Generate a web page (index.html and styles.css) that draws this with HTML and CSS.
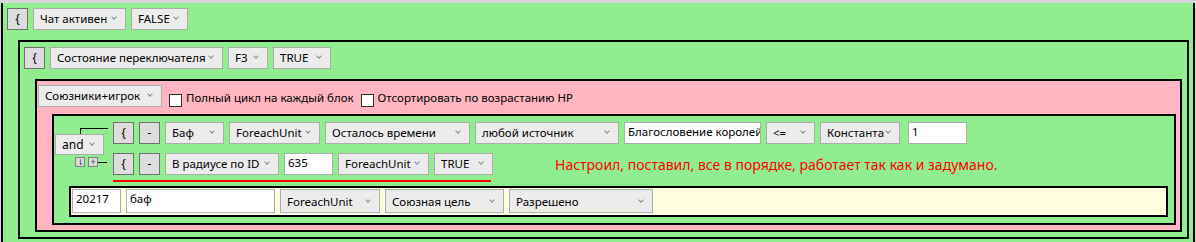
FILE: index.html
```html
<!DOCTYPE html>
<html lang="ru">
  <head>
    <meta charset="UTF-8" />
    <meta name="viewport" content="width=device-width, initial-scale=1.0" />
    <title>Правила бафов</title>
    <link rel="stylesheet" href="styles.css">
  </head>
  <body>
    <div class="block green root">
      <div class="row">
        <div class="btn">{</div>
        <div class="sel w93">Чат активен</div>
        <div class="sel w57">FALSE</div>
      </div>

      <div class="block green nested">
        <div class="row">
          <div class="btn">{</div>
          <div class="sel w173">Состояние переключателя</div>
          <div class="sel w40">F3</div>
          <div class="sel w58">TRUE</div>
        </div>

        <div class="block pink nested">
          <div class="row">
            <div class="sel w124">Союзники+игрок</div>
            <span class="check"></span>
            <span class="label">Полный цикл на каждый блок</span>
            <span class="check"></span>
            <span class="label">Отсортировать по возрастанию HP</span>
          </div>

          <div class="block green nested group">
            <div class="cond">
              <div class="logic">
                <div class="link-top"></div>
                <div class="sel w49">and</div>
                <div class="link-bottom">
                  <span class="mini">⇂</span>
                  <span class="mini">+</span>
                  <span class="link-line"></span>
                </div>
              </div>
              <div class="rules">
                <div class="row">
                  <div class="btn">{</div>
                  <div class="btn">-</div>
                  <div class="sel w59">Баф</div>
                  <div class="sel w91">ForeachUnit</div>
                  <div class="sel w145">Осталось времени</div>
                  <div class="sel w144">любой источник</div>
                  <div class="field w137">Благословение королей</div>
                  <div class="sel w49">&lt;=</div>
                  <div class="sel w80">Константа</div>
                  <div class="field w59 gap8">1</div>
                </div>
                <div class="row second">
                  <div class="btn">{</div>
                  <div class="btn">-</div>
                  <div class="sel w114">В радиусе по ID</div>
                  <div class="field w49">635</div>
                  <div class="sel w91">ForeachUnit</div>
                  <div class="sel w59">TRUE</div>
                  <span class="note">Настроил, поставил, все в порядке, работает так как и задумано.</span>
                </div>
                <div class="underline"></div>
              </div>
            </div>

            <div class="block yellow action">
              <div class="row tall">
                <div class="field w49">20217</div>
                <div class="field w149">баф</div>
                <div class="sel w100">ForeachUnit</div>
                <div class="sel w119">Союзная цель</div>
                <div class="sel w144">Разрешено</div>
              </div>
            </div>
          </div>
        </div>
      </div>
    </div>
  </body>
</html>
```

FILE: styles.css
```css
body {
  margin: 0;
  background-color: #d6d6d6;
  font-family: "Noto Sans", "Open Sans", sans-serif;
  font-size: 11.5px;
  color: #000;
}

.block {
  border: 2px solid #000;
  box-sizing: border-box;
}
.green {
  background-color: #90ee90;
}
.pink {
  background-color: #ffb6c1;
}
.yellow {
  background-color: #ffffe0;
}

.root {
  margin: 3px 1px 0;
  border-top: none;
  border-bottom: none;
  padding: 5px 4px 5px;
  min-height: 260px;
}
.nested {
  margin: 10px 0 0 11px;
  padding: 5px 4px 5px;
}
.pink.nested {
  margin-right: 1px;
  padding: 4px 0 5px 1px;
}
.group {
  margin: 7px 4px 0 14px;
  padding: 0 0 6px 0;
}

.row {
  display: flex;
  align-items: center;
  gap: 5px;
  height: 22px;
}
.row.second {
  margin-top: 9px;
}

.btn,
.sel,
.field {
  box-sizing: border-box;
  height: 22px;
  flex: none;
}
.btn {
  width: 21px;
  background-color: #dddddd;
  border: 1px solid #707070;
  text-align: center;
  line-height: 19px;
  font-size: 12px;
}
.sel {
  position: relative;
  background-color: #ececec;
  border: 1px solid #acacac;
  padding: 0 10px 0 6px;
  line-height: 20px;
  white-space: nowrap;
  overflow: hidden;
}
.sel::after {
  content: "";
  position: absolute;
  right: 9px;
  top: 6px;
  width: 3px;
  height: 3px;
  border-right: 1px solid #8a8a8a;
  border-bottom: 1px solid #8a8a8a;
  transform: rotate(45deg);
}
.field {
  background-color: #fff;
  border: 1px solid #abadb3;
  padding: 0 3px;
  line-height: 17px;
  white-space: nowrap;
  overflow: hidden;
}
.gap8 {
  margin-left: 3px;
}

.check {
  box-sizing: border-box;
  width: 13px;
  height: 13px;
  margin: 8px 0 0 2px;
  background-color: #fff;
  border: 1px solid #333;
  flex: none;
}
.label {
  margin: 3px 0 0 -1px;
  white-space: nowrap;
}

.cond {
  display: flex;
}
.logic {
  width: 59px;
  flex: none;
  padding-top: 12px;
  display: flex;
  flex-direction: column;
  align-items: flex-start;
}
.link-top {
  margin-left: 26px;
  width: 27px;
  height: 5px;
  border-top: 1px solid #000;
  border-left: 1px solid #000;
}
.logic .sel {
  margin-left: 1px;
  height: 21px;
  font-size: 12px;
}
.link-bottom {
  display: flex;
  align-items: center;
  margin: 2px 0 0 21px;
}
.mini {
  box-sizing: border-box;
  width: 10px;
  height: 10px;
  margin-right: 3px;
  background-color: #dcdcdc;
  border: 1px solid #808080;
  font-size: 8px;
  line-height: 8px;
  text-align: center;
  color: #333;
}
.mini + .mini {
  margin-right: 0;
}
.link-line {
  width: 9px;
  border-top: 1px solid #000;
}

.rules {
  padding-top: 6px;
}
.note {
  margin-left: 57px;
  color: #ff0000;
  font-size: 14px;
  white-space: nowrap;
}
.underline {
  margin-top: 5px;
  width: 378px;
  height: 2px;
  background-color: #ff0000;
}

.action {
  margin: 4px 6px 0 15px;
  padding: 1px 1px 2px;
}
.row.tall {
  height: 24px;
}
.tall .field,
.tall .sel {
  height: 24px;
}
.tall .sel {
  line-height: 24px;
}
.tall .sel::after {
  top: 8px;
}

.w40 { width: 40px; }
.w49 { width: 49px; }
.w57 { width: 57px; }
.w58 { width: 58px; }
.w59 { width: 59px; }
.w80 { width: 80px; }
.w91 { width: 91px; }
.w93 { width: 93px; }
.w100 { width: 100px; }
.w114 { width: 114px; }
.w119 { width: 119px; }
.w124 { width: 124px; }
.w137 { width: 137px; }
.w144 { width: 144px; }
.w145 { width: 145px; }
.w149 { width: 149px; }
.w173 { width: 173px; }
```
